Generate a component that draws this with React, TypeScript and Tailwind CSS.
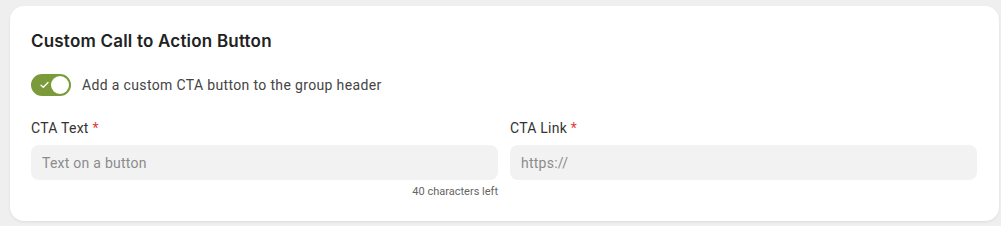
import React from 'react'

const Field = ({ label, placeholder, hint }: { label: string; placeholder: string; hint?: string }) => {
  return (
    <div className='flex flex-col'>
      <label className='text-[14px] leading-[20px] text-[#333333] tracking-[0.25px]'>
        {label} <span className='text-[#e53935]'>*</span>
      </label>
      <input
        className='mt-[7px] h-[35px] w-full rounded-[8px] bg-[#f2f2f2] px-[11px] text-[14px] text-[#333] placeholder:text-[#8c8c8c] outline-none tracking-[0.25px]'
        placeholder={placeholder}
      />
      {hint && (
        <div className='mt-[5px] text-right text-[11px] leading-[14px] text-[#666666]'>{hint}</div>
      )}
    </div>
  )
}

const App = () => {
  return (
    <div
      className='w-[1001px] h-[226px] bg-[#efefef] pt-[6px] pl-[10px] pr-[2px]'
      style={{ fontFamily: 'Roboto, "Noto Sans", sans-serif' }}
    >
      <div className='h-[215px] rounded-[14px] bg-white pl-[21px] pr-[22px] pt-[25px] shadow-[0_1px_3px_rgba(0,0,0,0.08)]'>
        <h2 className='font-[Inter,sans-serif] text-[17px] leading-[20px] font-semibold text-[#222222] tracking-[0.2px]'>
          Custom Call to Action Button
        </h2>

        <div className='mt-[23px] flex items-center gap-[11px]'>
          <div className='relative h-[22px] w-[40px] rounded-full bg-[#7b9b3b]'>
            <svg
              className='absolute left-[9px] top-[7px]'
              width='9'
              height='8'
              viewBox='0 0 9 8'
              fill='none'
            >
              <path d='M1 4.2 L3.3 6.3 L8 1.5' stroke='white' strokeWidth='1.3' strokeLinecap='round' strokeLinejoin='round' />
            </svg>
            <div className='absolute right-[2px] top-[2px] h-[18px] w-[18px] rounded-full bg-white' />
          </div>
          <span className='text-[14px] leading-[20px] text-[#444444] tracking-[0.35px]'>
            Add a custom CTA button to the group header
          </span>
        </div>

        <div className='mt-[22px] grid grid-cols-2 gap-[12px]'>
          <Field label='CTA Text' placeholder='Text on a button' hint='40 characters left' />
          <Field label='CTA Link' placeholder='https://' />
        </div>
      </div>
    </div>
  )
}

export default App
